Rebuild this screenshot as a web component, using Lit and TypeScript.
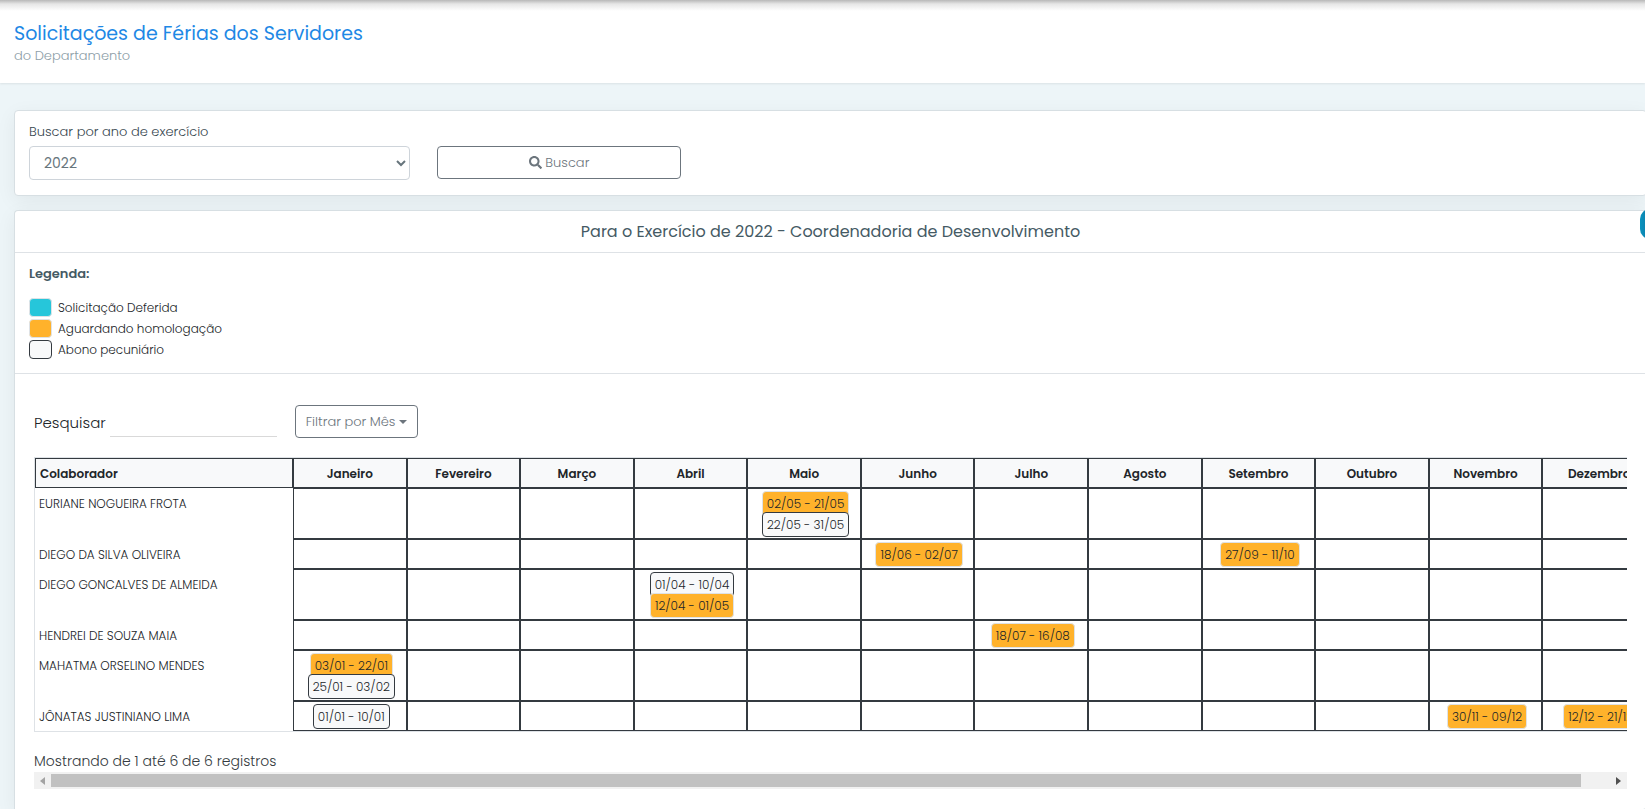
import { LitElement, html, css } from "lit";
import { customElement, state, query } from "lit/decorators.js";
import { classMap } from "lit/directives/class-map.js";

type Kind = "pending" | "allowance";
interface Period {
  month: number;
  text: string;
  kind: Kind;
}
interface Row {
  name: string;
  periods: Period[];
}

const MONTHS = [
  "Janeiro", "Fevereiro", "Março", "Abril", "Maio", "Junho",
  "Julho", "Agosto", "Setembro", "Outubro", "Novembro", "Dezembro",
];

const ROWS: Row[] = [
  {
    name: "EURIANE NOGUEIRA FROTA",
    periods: [
      { month: 4, text: "02/05 - 21/05", kind: "pending" },
      { month: 4, text: "22/05 - 31/05", kind: "allowance" },
    ],
  },
  {
    name: "DIEGO DA SILVA OLIVEIRA",
    periods: [
      { month: 5, text: "18/06 - 02/07", kind: "pending" },
      { month: 8, text: "27/09 - 11/10", kind: "pending" },
    ],
  },
  {
    name: "DIEGO GONCALVES DE ALMEIDA",
    periods: [
      { month: 3, text: "01/04 - 10/04", kind: "allowance" },
      { month: 3, text: "12/04 - 01/05", kind: "pending" },
    ],
  },
  {
    name: "HENDREI DE SOUZA MAIA",
    periods: [{ month: 6, text: "18/07 - 16/08", kind: "pending" }],
  },
  {
    name: "MAHATMA ORSELINO MENDES",
    periods: [
      { month: 0, text: "03/01 - 22/01", kind: "pending" },
      { month: 0, text: "25/01 - 03/02", kind: "allowance" },
    ],
  },
  {
    name: "JÔNATAS JUSTINIANO LIMA",
    periods: [
      { month: 0, text: "01/01 - 10/01", kind: "allowance" },
      { month: 10, text: "30/11 - 09/12", kind: "pending" },
      { month: 11, text: "12/12 - 21/12", kind: "pending" },
    ],
  },
];

@customElement("vacation-table")
export class VacationTable extends LitElement {
  static styles = css`
    :host {
      display: block;
    }
    .viewport {
      overflow-x: auto;
      scrollbar-width: none;
    }
    .frame {
      width: 1623px;
      box-sizing: border-box;
      border: 1px solid #dee2e6;
    }
    table {
      width: 100%;
      table-layout: fixed;
      border-collapse: separate;
      border-spacing: 0;
      font-size: 12px;
      line-height: 21px;
      color: #212529;
    }
    th {
      box-sizing: border-box;
      padding: 4px 4px 3px;
      border: 1px solid #343a40;
      background: #f8f9fa;
      font-weight: 600;
      text-align: center;
    }
    th.name {
      width: 258px;
      text-align: left;
    }
    td {
      padding: 4px 4px 3px 7px;
      border: 1px solid #343a40;
      vertical-align: top;
    }
    td.name {
      padding: 5px 4px 4px;
      border: 0;
      font-weight: 300;
    }
    .periods {
      display: flex;
      flex-direction: column;
      align-items: center;
      min-height: 21px;
    }
    .badge {
      box-sizing: border-box;
      height: 25px;
      margin: -2px 0;
      padding: 0 4px;
      border: 1px solid #dee2e6;
      border-radius: 4px;
      line-height: 23px;
      font-weight: 300;
      white-space: nowrap;
    }
    .pending {
      background: #ffb22b;
    }
    .allowance {
      background: #f8f9fa;
      border-color: #343a40;
    }
    .info {
      margin: 18px 0 0;
      font-size: 14px;
      line-height: 22px;
      font-weight: 300;
      color: #343a40;
    }
    .bar {
      display: flex;
      align-items: center;
      height: 17px;
      background: #f1f1f1;
    }
    .arrow {
      display: grid;
      place-items: center;
      width: 17px;
      height: 17px;
      padding: 0;
      border: 0;
      background: none;
      color: #505050;
    }
    .arrow:disabled {
      color: #a3a3a3;
    }
    .track {
      flex: 1;
      overflow: hidden;
    }
    .thumb {
      height: 13px;
      background: #c1c1c1;
    }
  `;

  @state() private share = 98;
  @state() private offset = 0;
  @query(".viewport") private viewport!: HTMLElement;

  private measure = () => {
    const v = this.viewport;
    this.share = (v.clientWidth / v.scrollWidth) * 100;
    this.offset = (v.scrollLeft / v.scrollWidth) * 100;
  };

  firstUpdated() {
    new ResizeObserver(this.measure).observe(this.viewport);
  }

  private move(step: number) {
    this.viewport.scrollBy({ left: step });
  }

  render() {
    return html`
      <div class="viewport" @scroll=${this.measure}>
        <div class="frame">
          <table>
            <thead>
              <tr>
                <th class="name" scope="col">Colaborador</th>
                ${MONTHS.map((m) => html`<th scope="col">${m}</th>`)}
              </tr>
            </thead>
            <tbody>
              ${ROWS.map(
                (row) => html`<tr>
                  <td class="name">${row.name}</td>
                  ${MONTHS.map(
                    (_, i) => html`<td>
                      <div class="periods">
                        ${row.periods
                          .filter((p) => p.month === i)
                          .map(
                            (p) => html`<span class=${classMap({ badge: true, [p.kind]: true })}>${p.text}</span>`
                          )}
                      </div>
                    </td>`
                  )}
                </tr>`
              )}
            </tbody>
          </table>
        </div>
      </div>
      <p class="info">Mostrando de 1 até 6 de 6 registros</p>
      <div class="bar">
        <button class="arrow" aria-label="Rolar para a esquerda" ?disabled=${this.offset === 0} @click=${() => this.move(-40)}>
          <svg width="5" height="8" viewBox="0 0 5 8"><path d="M5 0v8L0 4z" fill="currentColor" /></svg>
        </button>
        <div class="track">
          <div class="thumb" style="width:${this.share}%;margin-left:${this.offset}%"></div>
        </div>
        <button class="arrow" aria-label="Rolar para a direita" @click=${() => this.move(40)}>
          <svg width="5" height="8" viewBox="0 0 5 8"><path d="M0 0v8l5-4z" fill="currentColor" /></svg>
        </button>
      </div>
    `;
  }
}

@customElement("app-root")
export class AppRoot extends LitElement {
  static styles = css`
    :host {
      display: flex;
      flex-direction: column;
      position: relative;
      height: 100vh;
      overflow: hidden;
      background: #edf5f8;
      color: #455a64;
      font-family: Poppins, Inter, sans-serif;
      font-weight: 300;
    }
    .top {
      padding: 22px 14px 17px;
      background: linear-gradient(#b8b8b8, #e6e6e6 4px, #fff 11px);
      box-shadow: 0 1px 2px rgba(0, 0, 0, 0.08);
    }
    h1 {
      margin: 0;
      font-size: 19px;
      line-height: 24px;
      font-weight: 400;
      color: #1e88e5;
    }
    .sub {
      margin: 0;
      font-size: 13px;
      line-height: 20px;
      color: #8d9ea7;
    }
    main {
      flex: 1;
      display: flex;
      flex-direction: column;
      gap: 14px;
      margin: 27px -2px 0 14px;
    }
    .card {
      background: #fff;
      border: 1px solid #d7dfe3;
      border-radius: 4px;
      box-shadow: 0 5px 20px rgba(0, 0, 0, 0.06);
    }
    .grow {
      flex: 1;
      border-bottom: 0;
      border-bottom-left-radius: 0;
    }
    .search {
      display: grid;
      grid-template-columns: 381fr 244fr 922fr;
      column-gap: 27px;
      padding: 11px 15px 15px 14px;
      align-items: end;
    }
    .field {
      display: flex;
      flex-direction: column;
      gap: 4px;
    }
    .field label {
      font-size: 13px;
      line-height: 20px;
      color: #37474f;
    }
    select {
      height: 34px;
      padding: 0 0 0 10px;
      border: 1px solid #ced4da;
      border-radius: 4px;
      background: #fff;
      color: #67757c;
      font: inherit;
      font-size: 14px;
      font-weight: 400;
    }
    .btn {
      height: 33px;
      padding: 0 10px;
      border: 1px solid #6c757d;
      border-radius: 4px;
      background: #fff;
      color: #6c757d;
      font: inherit;
      font-size: 13px;
      display: flex;
      align-items: center;
      justify-content: center;
      gap: 3px;
    }
    .search .btn {
      align-self: end;
      margin-bottom: 1px;
    }
    h2 {
      margin: 0;
      padding: 9px 0 8px;
      border-bottom: 1px solid #dee2e6;
      font-size: 16px;
      line-height: 24px;
      font-weight: 400;
      text-align: center;
    }
    .legend {
      padding: 11px 14px 13px;
      border-bottom: 1px solid #dee2e6;
    }
    h3 {
      margin: 0 0 13px;
      font-size: 13px;
      line-height: 20px;
      font-weight: 600;
    }
    ul {
      margin: 0;
      padding: 0;
      list-style: none;
    }
    li {
      display: flex;
      align-items: center;
      gap: 6px;
      height: 21px;
      font-size: 12px;
      color: #212529;
    }
    .swatch {
      box-sizing: border-box;
      width: 23px;
      height: 19px;
      border: 1px solid #dee2e6;
      border-radius: 4px;
    }
    .granted {
      background: #26c6da;
    }
    .pending {
      background: #ffb22b;
    }
    .allowance {
      background: #f8f9fa;
      border-color: #343a40;
    }
    .body {
      padding: 31px 19px 20px;
    }
    .tools {
      display: flex;
      align-items: center;
      gap: 18px;
      margin-bottom: 19px;
    }
    .find {
      display: flex;
      align-items: center;
      gap: 4px;
      font-size: 15px;
      line-height: 20px;
      color: #212529;
    }
    .find label {
      padding-top: 2px;
    }
    .find input {
      box-sizing: border-box;
      width: 167px;
      height: 31px;
      padding: 0;
      border: 0;
      border-bottom: 1px solid #d9d9d9;
      background: none;
      font: inherit;
      outline: 0;
    }
    .caret {
      border: 4px solid transparent;
      border-top-color: currentColor;
      border-bottom: 0;
    }
    .side {
      position: absolute;
      right: -25px;
      top: 209px;
      width: 30px;
      height: 30px;
      padding: 0;
      border: 0;
      border-radius: 10px;
      background: linear-gradient(90deg, #0a94be, #0d7aa8 30%);
    }
  `;

  render() {
    return html`
      <header class="top">
        <h1>Solicitações de Férias dos Servidores</h1>
        <p class="sub">do Departamento</p>
      </header>
      <main>
        <form class="card search" @submit=${(e: Event) => e.preventDefault()}>
          <div class="field">
            <label for="year">Buscar por ano de exercício</label>
            <select id="year">
              <option>2022</option>
              <option>2021</option>
            </select>
          </div>
          <button class="btn" type="submit">
            <svg width="13" height="13" viewBox="0 0 512 512" aria-hidden="true">
              <path
                fill="currentColor"
                d="M505 442.7L405.300 343c-4.500-4.500-10.600-7-17-7H372c27.600-35.300 44-79.700 44-128C416 93.100 322.900 0 208 0S0 93.100 0 208s93.100 208 208 208c48.300 0 92.700-16.400 128-44v16.300c0 6.400 2.500 12.500 7 17l99.700 99.700c9.400 9.400 24.600 9.400 33.900 0l28.300-28.300c9.400-9.400 9.400-24.600.1-34zM208 336c-70.700 0-128-57.200-128-128 0-70.700 57.200-128 128-128 70.700 0 128 57.200 128 128 0 70.700-57.200 128-128 128z"
              />
            </svg>
            Buscar
          </button>
        </form>
        <section class="card grow">
          <h2>Para o Exercício de 2022 - Coordenadoria de Desenvolvimento</h2>
          <div class="legend">
            <h3>Legenda:</h3>
            <ul>
              <li><span class="swatch granted"></span>Solicitação Deferida</li>
              <li><span class="swatch pending"></span>Aguardando homologação</li>
              <li><span class="swatch allowance"></span>Abono pecuniário</li>
            </ul>
          </div>
          <div class="body">
            <div class="tools">
              <div class="find">
                <label for="find">Pesquisar</label>
                <input id="find" type="search" />
              </div>
              <button class="btn" type="button">Filtrar por Mês <span class="caret"></span></button>
            </div>
            <vacation-table></vacation-table>
          </div>
        </section>
      </main>
      <button class="side" aria-label="Abrir painel"></button>
    `;
  }
}
